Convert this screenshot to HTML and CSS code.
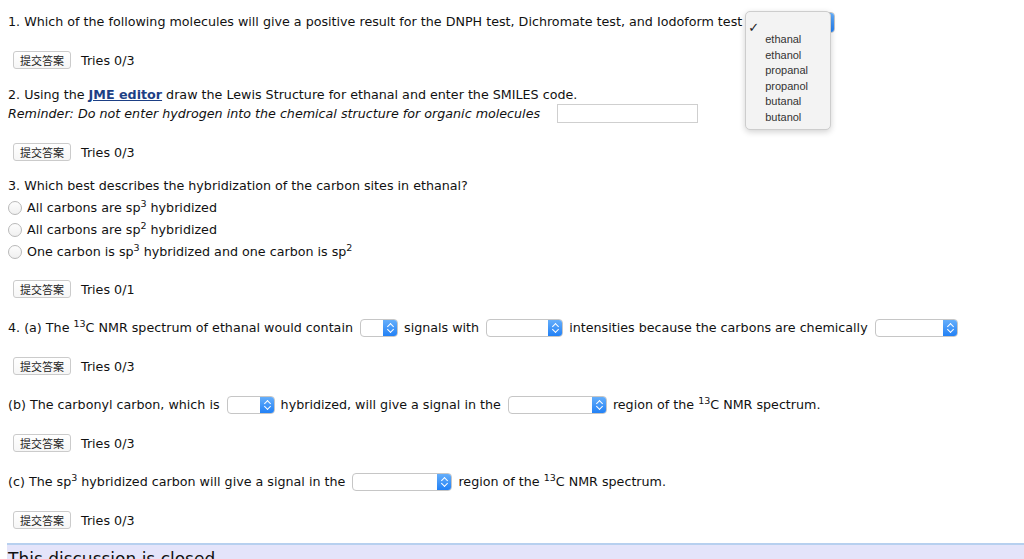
FILE: index.html
```html
<!DOCTYPE html>
<html>
<head>
<meta charset="utf-8">
<link rel="stylesheet" href="styles.css">
</head>
<body>
<div class="page">
  <div class="row q1">1. Which of the following molecules will give a positive result for the DNPH test, Dichromate test, and Iodoform test<span class="sel-wrap"><span class="sel sel-open"><span class="knob"></span></span><span class="menu"><span class="opt first"><span class="check">✓</span></span><span class="opt">ethanal</span><span class="opt">ethanol</span><span class="opt">propanal</span><span class="opt">propanol</span><span class="opt">butanal</span><span class="opt">butanol</span></span></span></div>
  <div class="row submit s16"><button class="btn">提交答案</button><span class="tries">Tries 0/3</span></div>

  <div class="q2">
    <div class="row">2. Using the <a class="jme" href="#">JME editor</a> draw the Lewis Structure for ethanal and enter the SMILES code.</div>
    <div class="row line2"><em>Reminder: Do not enter hydrogen into the chemical structure for organic molecules</em><span class="textbox"></span></div>
  </div>
  <div class="row submit s16"><button class="btn">提交答案</button><span class="tries">Tries 0/3</span></div>

  <div class="row q3">3. Which best describes the hybridization of the carbon sites in ethanal?</div>
  <div class="row"><span class="radio"></span>All carbons are sp<sup>3</sup> hybridized</div>
  <div class="row"><span class="radio"></span>All carbons are sp<sup>2</sup> hybridized</div>
  <div class="row"><span class="radio"></span>One carbon is sp<sup>3</sup> hybridized and one carbon is sp<sup>2</sup></div>
  <div class="row submit s15"><button class="btn">提交答案</button><span class="tries">Tries 0/1</span></div>

  <div class="row s17">4. (a) The <sup>13</sup>C NMR spectrum of ethanal would contain <span class="sel w38"><span class="knob"></span></span> signals with <span class="sel w77"><span class="knob"></span></span> intensities because the carbons are chemically <span class="sel w83"><span class="knob"></span></span></div>
  <div class="row submit s16"><button class="btn">提交答案</button><span class="tries">Tries 0/3</span></div>

  <div class="row s17">(b) The carbonyl carbon, which is <span class="sel w48"><span class="knob"></span></span> hybridized, will give a signal in the <span class="sel w99"><span class="knob"></span></span> region of the <sup>13</sup>C NMR spectrum.</div>
  <div class="row submit s16"><button class="btn">提交答案</button><span class="tries">Tries 0/3</span></div>

  <div class="row s17">(c) The sp<sup>3</sup> hybridized carbon will give a signal in the <span class="sel w100"><span class="knob"></span></span> region of the <sup>13</sup>C NMR spectrum.</div>
  <div class="row submit s16"><button class="btn">提交答案</button><span class="tries">Tries 0/3</span></div>

  <div class="discussion">This discussion is closed.</div>
</div>
</body>
</html>
```
FILE: styles.css
```css
* { box-sizing: border-box; }
html, body { margin: 0; padding: 0; background: #fff; overflow: hidden; }
body {
  font-family: "DejaVu Sans", Verdana, sans-serif;
  font-size: 12.7px;
  color: #111;
}
.page { padding: 0 0 0 8px; }
.row {
  display: block;
  height: 22px;
  line-height: 22px;
  white-space: nowrap;
}
.q1 { margin-top: 11px; }
.s15 { margin-top: 15px; }
.s16 { margin-top: 16px; }
.s17 { margin-top: 17px; }
.q2 { margin-top: 13px; }
.q2 .line2 { margin-top: -3px; }
.q3 { margin-top: 12px; }
.jme { color: #1d3f85; font-weight: bold; text-decoration: underline; }
em { font-style: italic; }
.textbox {
  display: inline-block;
  vertical-align: middle;
  width: 141px; height: 19px;
  margin-left: 17px;
  margin-top: -2px;
  border: 1px solid #cfcfcf;
  background: #fff;
}
sup { font-size: 9.5px; line-height: 0; position: relative; top: -5px; vertical-align: baseline; }

.submit { padding-left: 5px; }
.btn {
  display: inline-block;
  vertical-align: middle;
  font-family: "Noto Sans CJK SC", "DejaVu Sans", sans-serif;
  font-size: 11px;
  height: 18px;
  width: 58px;
  padding: 0;
  line-height: 16px;
  border: 1px solid #cbcbcb;
  border-radius: 3px;
  background: linear-gradient(#ffffff, #f6f6f6);
  color: #222;
  margin-top: -2px;
}
.tries { margin-left: 10px; vertical-align: middle; }

.radio {
  display: inline-block;
  vertical-align: middle;
  width: 14px; height: 14px;
  border-radius: 50%;
  border: 1px solid #b9b9b9;
  background: linear-gradient(#fdfdfd, #f0f0f0);
  margin: -2px 5px 0 0;
}

.sel {
  display: inline-block;
  vertical-align: middle;
  position: relative;
  height: 18px;
  margin: -2px 2px 0 3px;
  border: 1px solid #c6c6c6;
  border-radius: 4px;
  background: #fff;
  overflow: hidden;
}
.knob {
  position: absolute;
  right: -1px; top: -1px; bottom: -1px;
  width: 15px;
  background: linear-gradient(#69b1fb, #1e7ef5);
  border-radius: 0 4px 4px 0;
}
.knob::before, .knob::after {
  content: "";
  position: absolute;
  left: 5px;
  width: 4px; height: 4px;
  border-left: 1.3px solid #fff;
  border-top: 1.3px solid #fff;
}
.knob::before { top: 5px; transform: rotate(45deg); }
.knob::after { top: 8px; transform: rotate(225deg); }
.w38 { width: 38px; }
.w48 { width: 48px; }
.w77 { width: 77px; }
.w83 { width: 83px; }
.w99 { width: 99px; }
.w100 { width: 100px; }

.sel-wrap { position: relative; display: inline-block; vertical-align: top; height: 22px; width: 90px; }
.sel-open { position: absolute; left: 6px; top: 1px; width: 87px; height: 21px; margin: 0; }
.menu {
  position: absolute;
  left: 3px; top: 0;
  width: 86px;
  padding: 8px 0 4px 0;
  background: #f3f3f3;
  border: 1px solid #cdcdcd;
  border-radius: 5px;
  box-shadow: 0 2px 6px rgba(0,0,0,0.18);
  display: flex; flex-direction: column;
  font-family: "Liberation Sans", Arial, sans-serif;
  font-size: 11px;
  color: #333;
  z-index: 5;
}
.opt { display: block; height: 15.5px; line-height: 15.5px; padding-left: 19px; position: relative; }
.opt.first { height: 12px; line-height: 16px; }
.check { position: absolute; left: 2px; top: 0; font-family: "DejaVu Sans", sans-serif; font-size: 13px; color: #222; }

.discussion {
  margin-top: 12px;
  margin-left: -1px;
  height: 40px;
  border-top: 2px solid #b7d0ef;
  background: #e4e4fa;
  font-size: 17px;
  line-height: 20px;
  padding-top: 4px;
  padding-left: 1px;
  white-space: nowrap;
}
```
